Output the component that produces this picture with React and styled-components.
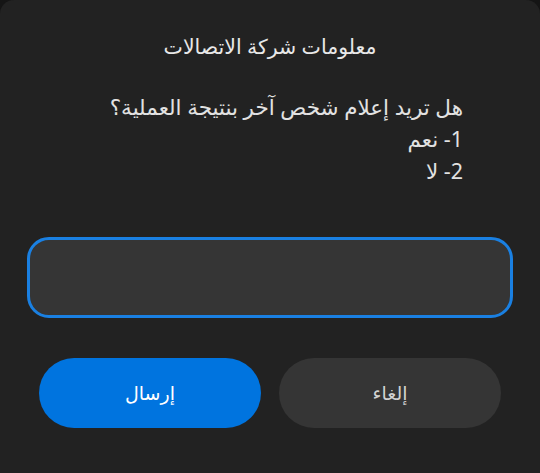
import React from "react"
import styled, { createGlobalStyle } from "styled-components"

const GlobalStyle = createGlobalStyle`
  html, body {
    margin: 0;
    padding: 0;
    background: #151515;
  }
`

const Dialog = styled.div`
  direction: rtl;
  width: 540px;
  height: 473px;
  box-sizing: border-box;
  background: #222222;
  border-radius: 14px 14px 0 0;
  padding: 30px 27px 0 27px;
  font-family: "Noto Sans", "DejaVu Sans", sans-serif;
  color: #e4e4e4;
  display: flex;
  flex-direction: column;
`

const Title = styled.h1`
  margin: 0;
  font-size: 20.5px;
  font-weight: 400;
  line-height: 32px;
  text-align: center;
  color: #e8e8e8;
`

const Message = styled.div`
  margin-top: 29px;
  padding-right: 50px;
  font-size: 21.5px;
  line-height: 32px;
  color: #e2e2e2;
`

const Line = styled.p`
  margin: 0;
`

const Field = styled.input`
  margin-top: 50px;
  height: 81px;
  box-sizing: border-box;
  width: 100%;
  background: #353535;
  border: 3px solid #1a80e2;
  border-radius: 22px;
  outline: none;
  color: #e4e4e4;
  font-family: inherit;
  font-size: 20px;
  padding: 0 18px;
`

const Actions = styled.div`
  margin-top: 40px;
  padding: 0 12px;
  display: flex;
  gap: 18px;
`

const Button = styled.button`
  flex: 1;
  height: 70px;
  border: none;
  border-radius: 35px;
  font-family: inherit;
  font-size: 19px;
  background: ${(p) => (p.$primary ? "#0074df" : "#353535")};
  color: ${(p) => (p.$primary ? "#ffffff" : "#d2d2d2")};
`

export default function App() {
  return (
    <>
      <GlobalStyle />
      <Dialog>
        <Title>معلومات شركة الاتصالات</Title>
        <Message>
          <Line>هل تريد إعلام شخص آخر بنتيجة العملية؟</Line>
          <Line>1- نعم</Line>
          <Line>2- لا</Line>
        </Message>
        <Field type="text" />
        <Actions>
          <Button>إلغاء</Button>
          <Button $primary>إرسال</Button>
        </Actions>
      </Dialog>
    </>
  )
}
